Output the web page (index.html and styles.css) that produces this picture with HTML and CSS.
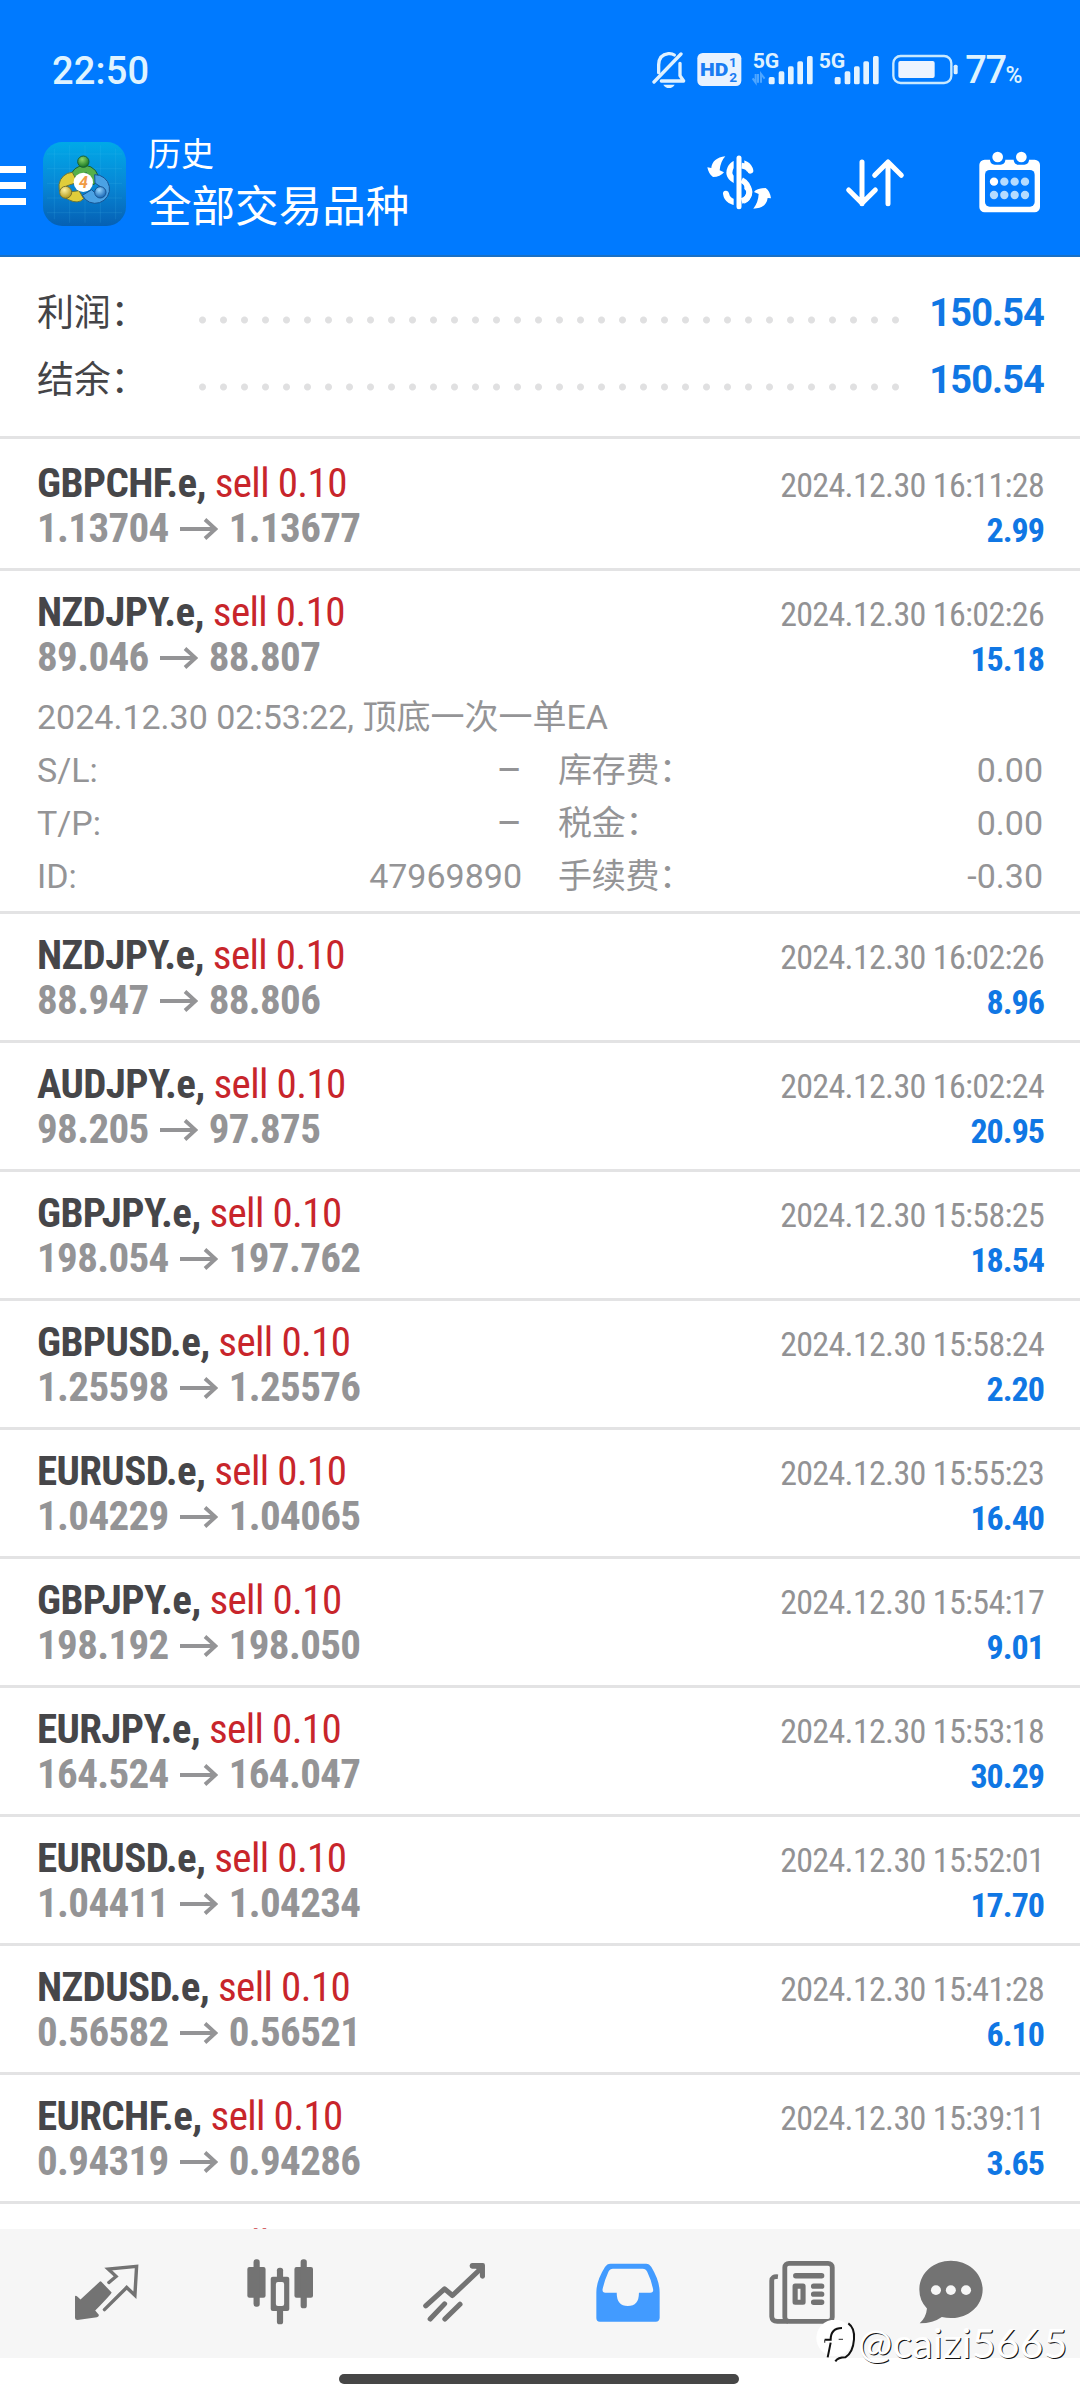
FILE: index.html
```
<!DOCTYPE html>
<html lang="zh-CN">
<head>
<meta charset="utf-8">
<title>历史</title>
<link rel="stylesheet" href="styles.css">
</head>
<body>
<svg class="defs" width="0" height="0"><symbol id="arrow" viewBox="0 0 38 22"><path d="M0 11H35M25 1.5L35.5 11L25 20.5" fill="none" stroke="currentColor" stroke-width="3.8"/></symbol></svg>
<div class="screen">
<header class="header">
  <div class="status">
    <span class="clock">22:50</span>
    <div class="status-right">
      <svg width="306" height="40" viewBox="100 60 918 120">
        <g fill="none" stroke="#dff1ff" stroke-width="10" stroke-linecap="round" stroke-linejoin="round">
          <path d="M106 156L187 72"/><path d="M120 128V104Q121 74 149 71Q160 70 167 75"/><path d="M128 153H195L184 137V100"/>
        </g>
        <path d="M134 164H168Q162 174 151 174Q140 174 134 164Z" fill="#dff1ff"/>
        <rect x="236" y="69" width="132" height="99" rx="16" fill="#e8f2ff"/>
        <g font-family="Roboto, sans-serif" font-weight="700">
          <text x="244" y="138" font-size="55" textLength="85" lengthAdjust="spacingAndGlyphs" font-weight="900" fill="#1a7cf2">HD</text>
          <text x="331" y="111" font-size="41" fill="#1a7cf2">1</text>
          <text x="332" y="155" font-size="41" fill="#1a7cf2">2</text>
          <text x="402" y="113" font-size="59" textLength="80" lengthAdjust="spacingAndGlyphs" fill="#dff1ff">5G</text>
          <text x="600" y="113" font-size="59" textLength="80" lengthAdjust="spacingAndGlyphs" fill="#dff1ff">5G</text>
        </g>
        <path d="M411 132V158L402 145M418 132V158M427 158V132L438 146" fill="none" stroke="#4ea6ff" stroke-width="6"/>
        <g id="bars" fill="#e4f3ff"><rect x="450" y="141" width="18" height="22" rx="5"/><rect x="480" y="124" width="17" height="39" rx="5"/><rect x="508" y="109" width="17" height="54" rx="5"/><rect x="536" y="94" width="17" height="69" rx="5"/><rect x="565" y="78" width="17" height="85" rx="5"/></g>
        <use href="#bars" x="198"/>
        <rect x="824" y="78" width="174" height="81" rx="22" fill="none" stroke="#c8e9ff" stroke-width="7"/>
        <rect x="839" y="93" width="109" height="51" rx="6" fill="#edf4ff"/>
        <rect x="1005" y="104" width="12" height="29" rx="5" fill="#dff1ff"/>
      </svg>
      <span class="battery">77<small>%</small></span>
    </div>
  </div>
  <div class="appbar">
    <div class="menu"><i></i><i></i><i></i></div>
    <svg class="logo" width="83" height="84" viewBox="0 0 249 252">
      <defs>
        <linearGradient id="bg" x1="0" y1="0" x2="0" y2="1"><stop offset="0" stop-color="#00a9e8"/><stop offset=".5" stop-color="#0788d6"/><stop offset="1" stop-color="#0560b4"/></linearGradient>
        <radialGradient id="gg" cx=".4" cy=".3" r=".7"><stop offset="0" stop-color="#8cd66a"/><stop offset="1" stop-color="#167622"/></radialGradient>
        <radialGradient id="gy" cx=".4" cy=".3" r=".7"><stop offset="0" stop-color="#fff2a0"/><stop offset="1" stop-color="#b39a1c"/></radialGradient>
        <radialGradient id="gb" cx=".4" cy=".3" r=".7"><stop offset="0" stop-color="#9bd8ff"/><stop offset="1" stop-color="#1565b4"/></radialGradient>
      </defs>
      <rect width="249" height="252" rx="58" fill="url(#bg)"/>
      <path d="M34 20V232M80 10V242M126 10V242M172 10V242M218 20V232M12 36H237M12 80H237M12 124H237M12 168H237M12 212H237" stroke="#5cc6f2" stroke-opacity=".22" stroke-width="2"/>
      <g stroke-width="3">
        <path d="M83 126A43 43 0 1 1 165 100Q166 123 150 128L130 92Z" fill="#56b04b" stroke="#175f37"/>
        <path d="M88 91A42 42 0 0 0 77 173Q105 188 122 170L108 146L72 151L70 132L104 121Z" fill="#e0cd3a" stroke="#66733a"/>
        <path d="M155 98A43 43 0 1 1 118 160L146 143L160 157L178 138L156 123Z" fill="#4ba2e4" stroke="#175493"/>
        <circle cx="121" cy="59" r="17" fill="url(#gg)" stroke="#175f37"/>
        <circle cx="68" cy="151" r="18" fill="url(#gy)" stroke="#77712d"/>
        <circle cx="172" cy="151" r="17" fill="url(#gb)" stroke="#175493"/>
      </g>
      <circle cx="121" cy="121" r="29" fill="#fff"/>
      <text x="121" y="138" text-anchor="middle" font-family="Roboto, sans-serif" font-style="italic" font-weight="700" font-size="48" fill="#f09a45">4</text>
    </svg>
    <div class="titles"><div class="sub">历史</div><div class="title">全部交易品种</div></div>
    <svg width="66" height="56" viewBox="262 378 198 168">
      <path d="M392 425C385 392 330 392 329 432C330 461 388 460 389 489C388 528 324 532 319 494" fill="none" stroke="#fff" stroke-width="18" stroke-linecap="round"/>
      <path d="M358 388V534" stroke="#007aff" stroke-width="32"/><path d="M358 387V533" stroke="#fff" stroke-width="15" stroke-linecap="round"/>
      <path d="M366 410Q384 412 390 425M366 453Q387 464 389 489Q387 510 366 516" stroke="#fff" stroke-width="17" fill="none"/>
      <path d="M317 382Q278 387 275 417L263 415Q267 436 280 444Q302 444 313 430L300 424Q302 398 317 382Z" fill="#fff"/>
      <path d="M401 539Q440 538 444 507L454 508Q451 486 438 477Q412 477 403 489L417 495Q416 520 401 539Z" fill="#fff"/>
    </svg>
    <svg width="60" height="50" viewBox="677 386 180 150"><path d="M728 398V523M688 482L728 522L768 482M806 523V398M766 438L806 398L846 438" fill="none" stroke="#fff" stroke-width="15" stroke-linecap="round" stroke-linejoin="round"/></svg>
    <svg width="62" height="62" viewBox="1079 364 186 186">
      <rect x="1080" y="390" width="182" height="158" rx="16" fill="#fff"/><rect x="1097" y="421" width="149" height="110" rx="14" fill="#007aff"/>
      <path d="M1112 388H1158V392Q1156 405 1144 405H1126Q1114 405 1112 392ZM1183 388H1229V392Q1227 405 1215 405H1197Q1185 405 1183 392Z" fill="#007aff"/>
      <circle cx="1135" cy="382" r="16" fill="#fff"/><circle cx="1206" cy="382" r="16" fill="#fff"/>
      <g fill="#b4dbff"><circle cx="1124" cy="456" r="12.5" fill="#fff"/><circle cx="1155" cy="456" r="12.5"/><circle cx="1186" cy="456" r="12.5"/><circle cx="1217" cy="456" r="12.5"/><circle cx="1124" cy="496" r="12.5"/><circle cx="1155" cy="496" r="12.5"/><circle cx="1186" cy="496" r="12.5"/><circle cx="1217" cy="496" r="12.5"/></g>
    </svg>
  </div>
</header>
<main class="content">
  <section class="summary">
    <div class="sum"><span>利润：</span><i class="dots"></i><b>150.54</b></div>
    <div class="sum"><span>结余：</span><i class="dots"></i><b>150.54</b></div>
  </section>
  <article class="deal"><div class="line"><span class="pair"><b>GBPCHF.e,</b> sell 0.10</span><span class="date">2024.12.30 16:11:28</span></div><div class="line"><span class="price">1.13704<svg><use href="#arrow"/></svg>1.13677</span><b class="profit">2.99</b></div></article>
  <article class="deal"><div class="line"><span class="pair"><b>NZDJPY.e,</b> sell 0.10</span><span class="date">2024.12.30 16:02:26</span></div><div class="line"><span class="price">89.046<svg><use href="#arrow"/></svg>88.807</span><b class="profit">15.18</b></div>
    <div class="details">
      <div class="comment">2024.12.30 02:53:22, 顶底一次一单EA</div>
      <span>S/L:</span><span class="val dash">–</span><span>库存费：</span><span class="val">0.00</span>
      <span>T/P:</span><span class="val dash">–</span><span>税金：</span><span class="val">0.00</span>
      <span>ID:</span><span class="val">47969890</span><span>手续费：</span><span class="val">-0.30</span>
    </div>
  </article>
  <article class="deal"><div class="line"><span class="pair"><b>NZDJPY.e,</b> sell 0.10</span><span class="date">2024.12.30 16:02:26</span></div><div class="line"><span class="price">88.947<svg><use href="#arrow"/></svg>88.806</span><b class="profit">8.96</b></div></article>
  <article class="deal"><div class="line"><span class="pair"><b>AUDJPY.e,</b> sell 0.10</span><span class="date">2024.12.30 16:02:24</span></div><div class="line"><span class="price">98.205<svg><use href="#arrow"/></svg>97.875</span><b class="profit">20.95</b></div></article>
  <article class="deal"><div class="line"><span class="pair"><b>GBPJPY.e,</b> sell 0.10</span><span class="date">2024.12.30 15:58:25</span></div><div class="line"><span class="price">198.054<svg><use href="#arrow"/></svg>197.762</span><b class="profit">18.54</b></div></article>
  <article class="deal"><div class="line"><span class="pair"><b>GBPUSD.e,</b> sell 0.10</span><span class="date">2024.12.30 15:58:24</span></div><div class="line"><span class="price">1.25598<svg><use href="#arrow"/></svg>1.25576</span><b class="profit">2.20</b></div></article>
  <article class="deal"><div class="line"><span class="pair"><b>EURUSD.e,</b> sell 0.10</span><span class="date">2024.12.30 15:55:23</span></div><div class="line"><span class="price">1.04229<svg><use href="#arrow"/></svg>1.04065</span><b class="profit">16.40</b></div></article>
  <article class="deal"><div class="line"><span class="pair"><b>GBPJPY.e,</b> sell 0.10</span><span class="date">2024.12.30 15:54:17</span></div><div class="line"><span class="price">198.192<svg><use href="#arrow"/></svg>198.050</span><b class="profit">9.01</b></div></article>
  <article class="deal"><div class="line"><span class="pair"><b>EURJPY.e,</b> sell 0.10</span><span class="date">2024.12.30 15:53:18</span></div><div class="line"><span class="price">164.524<svg><use href="#arrow"/></svg>164.047</span><b class="profit">30.29</b></div></article>
  <article class="deal"><div class="line"><span class="pair"><b>EURUSD.e,</b> sell 0.10</span><span class="date">2024.12.30 15:52:01</span></div><div class="line"><span class="price">1.04411<svg><use href="#arrow"/></svg>1.04234</span><b class="profit">17.70</b></div></article>
  <article class="deal"><div class="line"><span class="pair"><b>NZDUSD.e,</b> sell 0.10</span><span class="date">2024.12.30 15:41:28</span></div><div class="line"><span class="price">0.56582<svg><use href="#arrow"/></svg>0.56521</span><b class="profit">6.10</b></div></article>
  <article class="deal"><div class="line"><span class="pair"><b>EURCHF.e,</b> sell 0.10</span><span class="date">2024.12.30 15:39:11</span></div><div class="line"><span class="price">0.94319<svg><use href="#arrow"/></svg>0.94286</span><b class="profit">3.65</b></div></article>
  <article class="deal"><div class="line"><span class="pair"><b>NZDCHF.e,</b> sell 0.10</span></div></article>
</main>
<nav class="tabs">
  <svg width="65" height="57" viewBox="218 225 190 170" preserveAspectRatio="none"><path d="M293 278Q295 275 298 278L328 310Q326 316 280 364L291 377Q290 382 285 384L228 392Q221 392 221 386V321Q223 315 237 331Z" fill="#737373"/><path d="M320 280L341 262L318 240L401 232L396 318L372 295L307 361" fill="none" stroke="#737373" stroke-width="10" stroke-linecap="round" stroke-linejoin="miter"/></svg>
  <svg width="66" height="66" viewBox="717 210 192 198" preserveAspectRatio="none"><g fill="#737373"><rect x="718" y="234" width="53" height="92" rx="6"/><rect x="855" y="234" width="54" height="92" rx="6"/><rect x="736" y="211" width="18" height="142" rx="8"/><rect x="873" y="211" width="18" height="147" rx="8"/><rect x="786" y="263" width="54" height="103" rx="6"/><rect x="804" y="236" width="18" height="170" rx="8"/></g><rect x="801" y="279" width="24" height="72" rx="6" fill="#f6f6f6"/></svg>
  <svg width="63" height="61" viewBox="1225 216 184 182" preserveAspectRatio="none"><path d="M1233 347L1288 296L1311 316L1396 234M1246 386L1288 341M1289 386L1333 342" fill="none" stroke="#737373" stroke-width="15" stroke-linecap="round" stroke-linejoin="round"/><path d="M1368 219H1400Q1406 219 1406 226V260Q1405 266 1398 266Q1391 265 1391 258V244L1380 236H1368Q1361 234 1361 227Q1362 220 1368 219Z" fill="#737373"/></svg>
  <svg width="64" height="59" viewBox="161 217 185 177" preserveAspectRatio="none"><path d="M203 219H306Q315 219 321 229Q345 270 345 305V382Q344 393 334 393H172Q162 393 162 382V305Q162 270 187 229Q193 219 203 219ZM210 234Q201 234 197 243Q185 270 180 296Q179 306 188 306H221Q220 345 253 346Q286 345 285 306H318Q328 306 326 296Q321 268 309 243Q305 234 296 234Z" fill="#429bff" fill-rule="evenodd"/></svg>
  <svg width="66" height="65" viewBox="664 209 192 194" preserveAspectRatio="none"><g fill="none" stroke="#737373" stroke-width="14"><rect x="710" y="219" width="138" height="173" rx="12"/><path d="M690 259Q672 257 672 271V378Q673 392 688 392H720"/></g><rect x="706" y="300" width="10" height="86" fill="#737373"/><g stroke="#737373" stroke-linecap="round"><path d="M742 256H817M794 287H817M794 311H817M794 335H817" stroke-width="16"/></g><rect x="740" y="287" width="23" height="48" fill="none" stroke="#737373" stroke-width="15" stroke-linejoin="round"/></svg>
  <svg width="64" height="64" viewBox="1101 209 185 193" preserveAspectRatio="none"><path d="M1193 211C1243 211 1285 249 1285 298C1285 350 1240 386 1193 384Q1180 384 1167 381Q1142 400 1103 400Q1122 381 1124 355Q1102 332 1102 298C1102 249 1143 211 1193 211Z" fill="#737373"/><g fill="#f6f6f6"><circle cx="1150" cy="300" r="14.5"/><circle cx="1193" cy="300" r="14.5"/><circle cx="1237" cy="300" r="14.5"/></g></svg>
</nav>
<footer class="gesture"><i></i></footer>
<div class="watermark">
  <svg width="42" height="46" viewBox="46 36 126 138"><circle cx="102" cy="90" r="55" fill="#fff"/><path d="M81 148L90 104M72 95H90Q90 60 124 60" fill="none" stroke="#111" stroke-width="6"/><path d="M72 95V104M114 94H127" stroke="#555" stroke-width="4"/><path d="M143 46Q163 60 160 94Q157 134 134 148Q112 148 104 160" fill="none" stroke="#111" stroke-width="6"/></svg>
  <span>@caizi5665</span>
</div>
</div>
</body>
</html>
```
FILE: styles.css
```
* { box-sizing: border-box; }
body { margin: 0; background: #fff; font-family: Roboto, "Noto Sans CJK SC", sans-serif; }
svg { display: block; flex: none; }
.defs { position: absolute; }
.screen { position: relative; width: 1080px; height: 2400px; overflow: hidden; display: flex; flex-direction: column; }

.header { height: 257px; background: #007aff; border-bottom: 2px solid #1a70c4; color: #fff; flex: none; }
.status { height: 128px; padding: 50px 59px 0 52px; display: flex; justify-content: space-between; align-items: flex-start; color: #dff3ff; }
.clock { font-size: 38px; line-height: 42px; font-weight: 500; letter-spacing: .2px; }
.status-right { display: flex; gap: 7px; }
.battery { font-size: 38px; line-height: 41px; font-weight: 500; letter-spacing: -1.5px; white-space: nowrap; }
.battery small { font-size: 23px; }
.appbar { height: 127px; display: flex; align-items: flex-start; padding-right: 39px; }
.menu { width: 26px; margin-top: 38px; display: flex; flex-direction: column; gap: 9px; }
.menu i { height: 7px; background: #fff; }
.logo { margin: 14px 22px 0 17px; }
.titles { width: 561px; }
.sub { font-size: 33px; line-height: 40px; margin-top: 7px; }
.title { font-size: 43.6px; line-height: 52px; margin-top: 7px; }
.appbar > svg:nth-of-type(2) { margin-top: 27px; }
.appbar > svg:nth-of-type(3) { margin: 30px 74px 0 72px; }
.appbar > svg:nth-of-type(4) { margin-top: 23px; }

.content { height: 1972px; overflow: hidden; flex: none; }
.summary { height: 182px; padding: 22px 37px 0; border-bottom: 3px solid #e3e3e4; margin-bottom: 3px; }
.sum { height: 67px; display: flex; align-items: center; color: #444447; font-size: 37px; }
.sum span { width: 161px; white-space: nowrap; margin-top: -6px; letter-spacing: -.3px; }
.sum b { margin-left: auto; color: #1077e4; font-size: 38px; letter-spacing: -.9px; margin-right: -1px; }
.dots { width: 714px; height: 8px; margin-top: 15px; background: radial-gradient(circle at 4.5px 4px, #e0e0e1 3px, transparent 4px) 0 0 / 21px 8px; }

.deal { padding: 19px 37px 17px; border-bottom: 3px solid #e3e3e4; }
.line { height: 45px; line-height: 45px; display: flex; justify-content: space-between; align-items: baseline; font-stretch: 75%; white-space: nowrap; }
.pair { font-size: 41px; color: #c8252b; letter-spacing: -.62px; }
.pair b { color: #464649; }
.date { font-size: 34px; color: #929294; letter-spacing: -.67px; margin-right: -1px; }
.price { font-size: 41px; font-weight: 700; color: #949496; display: flex; align-items: center; letter-spacing: -.65px; }
.price svg { width: 38px; height: 22px; margin: 0 11px 0 11px; }
.profit { font-size: 34px; color: #1077e4; letter-spacing: -1px; margin-right: -1px; }
.details { display: grid; grid-template-columns: 100px 385px 206px 1fr; grid-auto-rows: 53px; line-height: 53px; font-size: 34px; color: #949496; padding-top: 11px; height: 214px; white-space: nowrap; }
.comment { grid-column: 1 / -1; }
.val { text-align: right; }
.dash { font-size: 39px; }
.details span:nth-of-type(4n+3) { padding-left: 36px; letter-spacing: -.3px; }

.tabs { height: 129px; background: #f6f6f6; flex: none; display: grid; grid-template-columns: repeat(5, 174px) 124px; padding: 0 0 3px 19px; align-items: center; justify-items: center; }
.gesture { height: 42px; display: flex; justify-content: center; padding: 16px 2px 0 0; }
.gesture i { width: 400px; height: 10px; border-radius: 5px; background: #464646; }
.watermark { position: absolute; left: 816px; top: 2320px; display: flex; align-items: center; }
.watermark span { font-family: Lato, sans-serif; font-weight: 400; font-size: 41px; line-height: 46px; letter-spacing: .2px; color: #fff; text-shadow: 1px 1px 0 #111; }
```
